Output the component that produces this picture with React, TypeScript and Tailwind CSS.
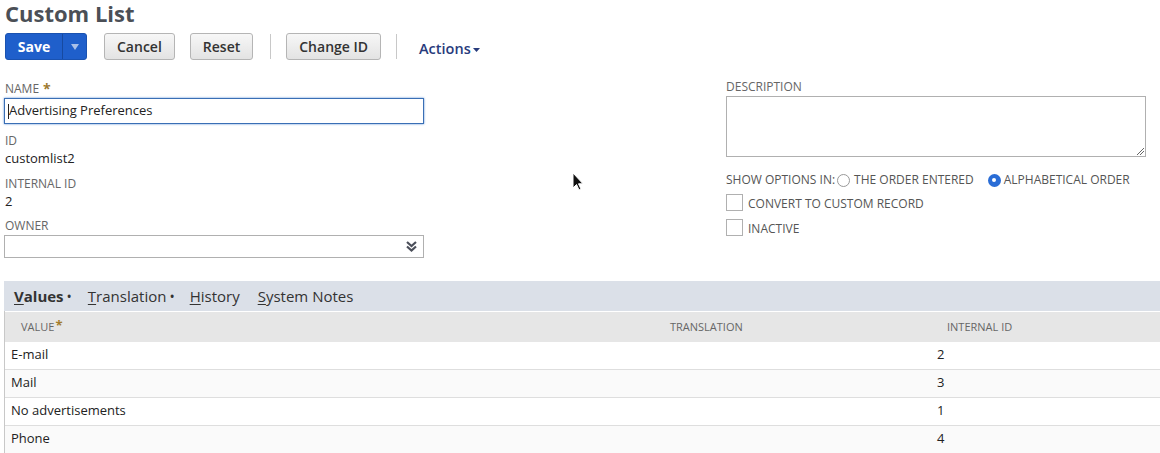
import React from "react";

function Btn({ children }: { children: React.ReactNode }) {
  return (
    <button className="h-[27px] px-[12px] rounded-[3px] border border-[#b5b5b5] bg-gradient-to-b from-[#f7f7f7] to-[#e3e3e3] text-[14px] font-semibold text-[#333] leading-none">
      {children}
    </button>
  );
}

function Sep() {
  return <div className="w-px h-[25px] bg-[#c8c8c8]" />;
}

function Label({ children }: { children: React.ReactNode }) {
  return <div className="text-[12px] leading-[16px] text-[#666] uppercase">{children}</div>;
}

const rows = [
  { v: "E-mail", id: "2", bg: "bg-white" },
  { v: "Mail", id: "3", bg: "bg-[#fafafa]" },
  { v: "No advertisements", id: "1", bg: "bg-white" },
  { v: "Phone", id: "4", bg: "bg-[#fafafa]" },
];

export default function App() {
  return (
    <div className="relative w-[1160px] h-[453px] overflow-hidden bg-white font-['Open_Sans',sans-serif] text-[#222]">
      <h1 className="pl-[5px] pt-[1px] text-[22px] font-bold leading-[24px] text-[#4b4f56]">Custom List</h1>

      <div className="flex items-center mt-[8px] pl-[5px] h-[27px]">
        <div className="flex h-[27px] w-[82px] rounded-[3px] bg-[#1f5fcb] border border-[#1a52b0] text-white">
          <div className="w-[56px] flex items-center justify-center text-[14px] font-bold">Save</div>
          <div className="w-px bg-[#174aa0]" />
          <div className="flex-1 flex items-center justify-center">
            <svg width="8" height="6" viewBox="0 0 8 6"><path d="M0 0h8L4 6z" fill="#a9c0e8" /></svg>
          </div>
        </div>
        <div className="ml-[17px]"><Btn>Cancel</Btn></div>
        <div className="ml-[15px]"><Btn>Reset</Btn></div>
        <div className="ml-[17px]"><Sep /></div>
        <div className="ml-[15px]"><Btn>Change ID</Btn></div>
        <div className="ml-[15px]"><Sep /></div>
        <div className="ml-[22px] flex items-center text-[14.5px] font-semibold text-[#283b7c] mt-[4px]">
          Actions
          <svg className="ml-[2px] mt-[2px]" width="7" height="4" viewBox="0 0 7 4"><path d="M0 0h7L3.5 4z" fill="#283b7c" /></svg>
        </div>
      </div>

      <div className="flex mt-[21px]">
        <div className="ml-[4px] w-[420px]">
          <div className="pl-[1px] flex items-center">
            <Label>Name</Label>
            <span className="ml-[4px] text-[14px] leading-[14px] text-[#9d7a2f] font-bold">*</span>
          </div>
          <div className="mt-[1px] h-[26px] border border-[#3a6fb5] shadow-[0_0_2px_#5b8fd6] flex items-center pl-[3px] text-[13px] text-[#222]">
            <span className="w-px h-[15px] bg-[#222]" />
            Advertising Preferences
          </div>
          <div className="mt-[9px] pl-[1px]"><Label>ID</Label></div>
          <div className="pl-[1px] text-[13px] leading-[18px]">customlist2</div>
          <div className="mt-[9px] pl-[1px]"><Label>Internal ID</Label></div>
          <div className="pl-[1px] text-[13px] leading-[18px]">2</div>
          <div className="mt-[8px] pl-[1px]"><Label>Owner</Label></div>
          <div className="mt-[1px] h-[23px] border border-[#b0b0b0] flex items-center justify-end pr-[6px]">
            <svg width="11" height="11" viewBox="0 0 11 11">
              <path d="M1 1l4.5 4 4.5-4M1 5.5l4.5 4 4.5-4" stroke="#4b4f5a" strokeWidth="2.2" fill="none" />
            </svg>
          </div>
        </div>

        <div className="ml-[302px] w-[420px] mt-[-2px]">
          <Label>Description</Label>
          <div className="relative mt-[1px] h-[61px] border border-[#b0b0b0]">
            <svg className="absolute right-[1px] bottom-[1px]" width="8" height="8" viewBox="0 0 8 8">
              <path d="M1 8L8 1M4 8L8 4" stroke="#666" strokeWidth="1" />
            </svg>
          </div>
          <div className="mt-[14px] flex items-center text-[12px] text-[#555]">
            <span>SHOW OPTIONS IN:</span>
            <span className="ml-[2px] w-[13px] h-[13px] rounded-full border border-[#999] bg-white" />
            <span className="ml-[4px]">THE ORDER ENTERED</span>
            <span className="ml-[14px] w-[13px] h-[13px] rounded-full bg-[#2a6dd6] flex items-center justify-center">
              <span className="w-[4px] h-[4px] rounded-full bg-white" />
            </span>
            <span className="ml-[3px]">ALPHABETICAL ORDER</span>
          </div>
          <div className="mt-[5px] flex items-end">
            <span className="w-[17px] h-[17px] border border-[#b0b0b0]" />
            <span className="ml-[5px] text-[12px] leading-[14px] text-[#555]">CONVERT TO CUSTOM RECORD</span>
          </div>
          <div className="mt-[8px] flex items-end">
            <span className="w-[17px] h-[17px] border border-[#b0b0b0]" />
            <span className="ml-[5px] text-[12px] leading-[14px] text-[#555]">INACTIVE</span>
          </div>
        </div>
      </div>

      <div className="mt-[23px] ml-[4px]">
        <div className="h-[30px] bg-[#dbe0e8] flex items-center text-[15px] text-[#333] pl-[10px]">
          <span className="font-bold"><span className="underline underline-offset-2">V</span>alues</span>
          <span className="ml-[3px] text-[14px]">•</span>
          <span className="ml-[16px]"><span className="underline underline-offset-2">T</span>ranslation</span>
          <span className="ml-[3px] text-[14px]">•</span>
          <span className="ml-[15px]"><span className="underline underline-offset-2">H</span>istory</span>
          <span className="ml-[18px]"><span className="underline underline-offset-2">S</span>ystem Notes</span>
        </div>
        <div className="border-l border-[#c8c8c8]">
          <div className="h-[31px] bg-[#e6e6e6] border-t border-white flex items-center text-[11px] text-[#666] uppercase">
            <div className="w-[662px] pl-[16px] flex items-center">
              VALUE<span className="ml-[1px] text-[13px] leading-[10px] font-bold text-[#a37d2c] -mt-[4px]">*</span>
            </div>
            <div className="w-[277px] pl-[3px]">Translation</div>
            <div className="pl-[3px]">Internal ID</div>
          </div>
          {rows.map((r) => (
            <div key={r.v} className={`h-[28px] border-b border-[#dedede] flex items-center text-[13px] pb-[2px] ${r.bg}`}>
              <div className="w-[662px] pl-[6px]">{r.v}</div>
              <div className="w-[267px]" />
              <div className="pl-[3px]">{r.id}</div>
            </div>
          ))}
        </div>
      </div>

      <svg className="absolute left-[572px] top-[172px]" width="12" height="19" viewBox="0 0 12 19">
        <path d="M1 1v15l3.5-3.5 2.5 5.5 2-1-2.5-5.2H11z" fill="#111" stroke="#fff" strokeWidth="1" />
      </svg>
    </div>
  );
}
